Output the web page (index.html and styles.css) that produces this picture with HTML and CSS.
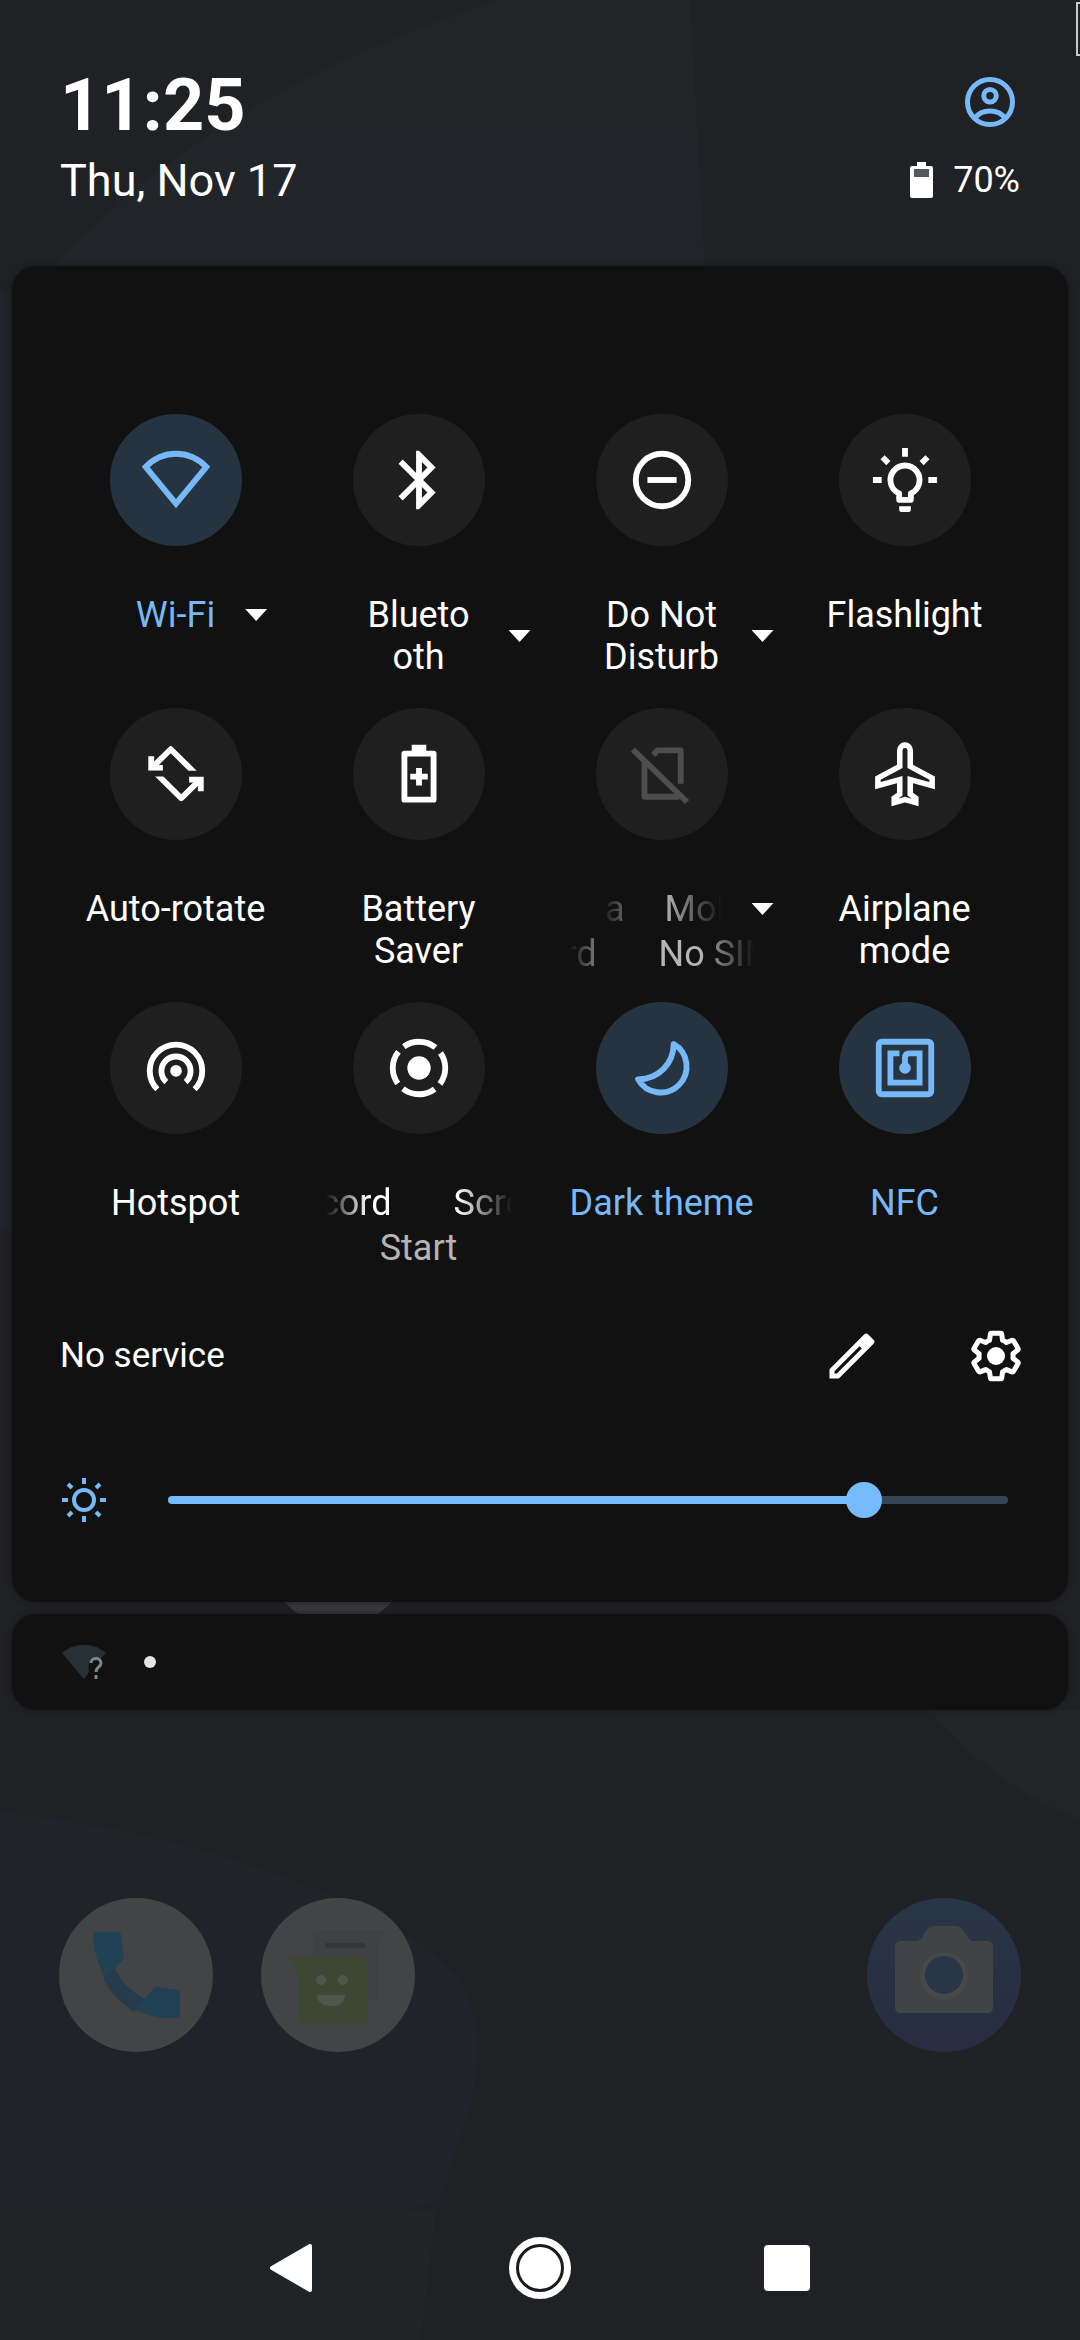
FILE: index.html
```html
<!DOCTYPE html>
<html lang="en">
<head>
<meta charset="utf-8">
<meta name="viewport" content="width=device-width, initial-scale=1">
<title>Quick settings</title>
<link rel="stylesheet" href="styles.css">
</head>
<body>
<svg class="wallpaper" viewBox="0 0 1080 2340" preserveAspectRatio="none" aria-hidden="true">
  <defs><linearGradient id="sheen" x2="0" y2="1"><stop offset=".4" stop-color="#222427"/><stop offset=".6" stop-color="#21252a"/></linearGradient></defs>
  <path fill="url(#sheen)" d="M40 280C130 190 230 90 500 0H690L705 280z"/>
  <path fill="#20242a" d="M0 290H12V1230H0zM0 1812C180 1830 390 1900 455 1975C500 2040 470 2110 440 2200L400 2210H0z"/>
  <path fill="#212427" d="M0 2210H436L420 2340H0z"/>
  <path fill="#222428" d="M930 1710C980 1770 1030 1800 1080 1820V1710z"/>
  <circle fill="#3a3b3d" cx="338" cy="1555" r="71"/>
  <path fill="none" stroke="#c8c8c8" stroke-width="2" d="M1082 3H1077V55H1082"/>
</svg>

<header class="status">
  <time class="clock">11:25</time>
  <button class="icon-button user" aria-label="User">
    <svg class="icon" viewBox="0 0 24 24"><g fill="none" stroke="currentColor" stroke-width="2"><circle cx="12" cy="12" r="9"/><circle cx="12" cy="9.5" r="2.5"/><path d="M6 18.4C8.6 14.6 15.4 14.6 18 18.4"/></g></svg>
  </button>
  <span class="date">Thu, Nov 17</span>
  <span class="battery">
    <svg class="battery-icon" viewBox="0 0 23 36"><path fill="currentColor" d="M7 0h9v4h5a2 2 0 0 1 2 2v28a2 2 0 0 1-2 2H2a2 2 0 0 1-2-2V6a2 2 0 0 1 2-2h5z"/><path fill="#55585a" d="M4 7h15v8H4z"/></svg>
    70%
  </span>
</header>

<main class="panel">
  <div class="tiles">
    <button class="tile on">
      <span class="disc"><svg class="tile-icon" viewBox="0 0 24 24"><path fill="none" stroke="currentColor" stroke-width="2" d="M12 20.1L1.6 7.5C4.4 4.7 8 3 12 3s7.6 1.7 10.4 4.5z"/></svg></span>
      <span class="label"><span class="name">Wi-Fi</span><span class="caret"></span></span>
    </button>
    <button class="tile">
      <span class="disc"><svg class="tile-icon" viewBox="0 0 24 24"><path fill="currentColor" d="M17.71 7.71L12 2h-1v7.59L6.41 5 5 6.41 10.59 12 5 17.59 6.41 19 11 14.41V22h1l5.71-5.71-4.3-4.29 4.3-4.29zM13 5.83l1.88 1.88L13 9.59V5.83zm1.88 10.46L13 18.17v-3.76l1.88 1.88z"/></svg></span>
      <span class="label"><span class="name">Bluetooth</span><span class="caret"></span></span>
    </button>
    <button class="tile">
      <span class="disc"><svg class="tile-icon" viewBox="0 0 24 24"><g fill="none" stroke="currentColor" stroke-width="2"><circle cx="12" cy="12" r="9"/><path d="M7 12h10"/></g></svg></span>
      <span class="label"><span class="name">Do Not Disturb</span><span class="caret"></span></span>
    </button>
    <button class="tile">
      <span class="disc"><svg class="tile-icon" viewBox="0 0 24 24"><g fill="none" stroke="currentColor" stroke-width="2"><path d="M12 1v3M1 12h3M20 12h3M4.3 4.2l2 2M19.7 4.2l-2 2"/><path d="M10 18.8h4v-2.2a5 5 0 1 0-4 0z" stroke-linejoin="round"/></g><path fill="currentColor" d="M10 21h4v1a1 1 0 0 1-1 1h-2a1 1 0 0 1-1-1z"/></svg></span>
      <span class="label"><span class="name">Flashlight</span></span>
    </button>

    <button class="tile">
      <span class="disc"><svg class="tile-icon" viewBox="0 0 24 24"><defs><clipPath id="upper"><path d="M0 0h24v10.9H0z"/></clipPath></defs><g id="half" clip-path="url(#upper)"><path fill="none" stroke="currentColor" stroke-width="2" stroke-linejoin="round" d="M4.4 9.2L10.2 3.5L19.2 12.4"/><path fill="currentColor" d="M2.5 5.9h2v3h3v2h-5z"/></g><use href="#half" transform="rotate(180 12 11.9)"/></svg></span>
      <span class="label"><span class="name">Auto-rotate</span></span>
    </button>
    <button class="tile">
      <span class="disc"><svg class="tile-icon" viewBox="0 0 24 24"><path fill="none" stroke="currentColor" stroke-width="2" stroke-linejoin="round" d="M7 5h10v15.8H7z"/><path fill="currentColor" d="M9.5 2h5v3h-5zM11 9.9h2v2h2v2h-2v2h-2v-2H9v-2h2z"/></svg></span>
      <span class="label"><span class="name">Battery Saver</span></span>
    </button>
    <button class="tile unavailable" aria-label="Mobile data, No SIM card">
      <span class="disc"><svg class="tile-icon" viewBox="0 0 24 24"><g fill="none" stroke="currentColor" stroke-width="2" stroke-linejoin="round"><path d="M2 3.6L20.6 21.6"/><path d="M6 7.6v12.2h12M9 5.5l1.4-1.6h8v11.4"/></g></svg></span>
      <span class="label"><span class="name marquee narrow"><span class="tail">a</span><span class="head">Mob</span></span><span class="caret"></span></span>
      <span class="sub marquee"><span class="tail short">rd</span><span class="head">No SIM</span></span>
    </button>
    <button class="tile">
      <span class="disc"><svg class="tile-icon" viewBox="0 0 24 24"><path fill="none" stroke="currentColor" stroke-width="1.9" d="M12 2.1a1.8 1.8 0 0 0-1.8 1.8v5.5L2.7 13.4v2.6l7.5-2.1v5l-1.9 1.4v1.5l3.7-1 3.7 1v-1.5l-1.9-1.4v-5l7.5 2.1v-2.6l-7.5-4V3.9A1.8 1.8 0 0 0 12 2.1z"/></svg></span>
      <span class="label"><span class="name">Airplane mode</span></span>
    </button>

    <button class="tile">
      <span class="disc"><svg class="tile-icon" viewBox="0 0 24 24"><circle cx="12" cy="13" r="2" fill="currentColor"/><g fill="none" stroke="currentColor" stroke-width="2"><path d="M8.7 16.8A5 5 0 1 1 15.3 16.8"/><path d="M5.6 19.3A9 9 0 1 1 18.4 19.3"/></g></svg></span>
      <span class="label"><span class="name">Hotspot</span></span>
    </button>
    <button class="tile" aria-label="Screen Record, Start">
      <span class="disc"><svg class="tile-icon" viewBox="0 0 24 24"><circle cx="12" cy="12" r="4" fill="currentColor"/><circle cx="12" cy="12" r="9" fill="none" stroke="currentColor" stroke-width="2" stroke-dasharray="11.64 2.497" stroke-dashoffset="5.82"/></svg></span>
      <span class="label"><span class="name marquee"><span class="tail long">cord</span><span class="head">Scre</span></span></span>
      <span class="sub">Start</span>
    </button>
    <button class="tile on">
      <span class="disc"><svg class="tile-icon" viewBox="0 0 24 24"><path fill="none" stroke="currentColor" stroke-width="2" stroke-linejoin="round" d="M16 3.8A8.9 8.9 0 1 1 3.8 15.9C11 15.7 15.9 10.5 16 3.8z"/></svg></span>
      <span class="label"><span class="name">Dark theme</span></span>
    </button>
    <button class="tile on">
      <span class="disc"><svg class="tile-icon" viewBox="0 0 24 24"><g fill="none" stroke="currentColor" stroke-width="2"><rect x="3" y="3" width="18" height="18" rx="1"/><path d="M10.1 7H7v10h10V7h-3.5Q12 7 12 8.5V12"/></g><circle cx="12" cy="12" r="2" fill="currentColor"/></svg></span>
      <span class="label"><span class="name">NFC</span></span>
    </button>
  </div>

  <div class="footer">
    <span class="carrier">No service</span>
    <button class="icon-button" aria-label="Edit tiles">
      <svg class="icon" viewBox="0 0 24 24"><path fill="currentColor" fill-rule="evenodd" d="M3 17.25V21h3.75L20.71 7.04c.39-.39.39-1.02 0-1.41l-2.34-2.34c-.39-.39-1.02-.39-1.41 0zM5 19v-.92L15 8.1l.92.92L5.92 19z"/></svg>
    </button>
    <button class="icon-button" aria-label="Settings">
      <svg class="icon" viewBox="0 0 24 24"><path fill="none" stroke="currentColor" stroke-width="2.2" stroke-linejoin="round" transform="translate(1.1 1.1) scale(.91)" d="M19.43 12.98c.04-.32.07-.64.07-.98 0-.34-.03-.66-.07-.98l2.11-1.65c.19-.15.24-.42.12-.64l-2-3.46c-.09-.16-.26-.25-.44-.25-.06 0-.12.01-.17.03l-2.49 1c-.52-.4-1.08-.73-1.69-.98l-.38-2.65C14.46 2.18 14.25 2 14 2h-4c-.25 0-.46.18-.49.42l-.38 2.65c-.61.25-1.17.59-1.69.98l-2.49-1c-.06-.02-.12-.03-.18-.03-.17 0-.34.09-.43.25l-2 3.46c-.13.22-.07.49.12.64l2.11 1.65c-.04.32-.07.65-.07.98 0 .33.03.66.07.98l-2.11 1.65c-.19.15-.24.42-.12.64l2 3.46c.09.16.26.25.44.25.06 0 .12-.01.17-.03l2.49-1c.52.4 1.08.73 1.69.98l.38 2.65c.03.24.24.42.49.42h4c.25 0 .46-.18.49-.42l.38-2.65c.61-.25 1.17-.59 1.69-.98l2.49 1c.06.02.12.03.18.03.17 0 .34-.09.43-.25l2-3.46c.12-.22.07-.49-.12-.64z"/><circle cx="12" cy="12" r="3.6" fill="currentColor"/></svg>
    </button>
  </div>

  <div class="brightness">
    <svg class="sun" viewBox="-24 -24 48 48" aria-hidden="true"><g fill="none" stroke="currentColor" stroke-width="4"><circle r="10"/><path d="M0-22v6M0 22v-6M-22 0h6M22 0h-6M-16-16l4 4M16-16l-4 4M-16 16l4-4M16 16l-4-4"/></g></svg>
    <input class="slider" type="range" min="0" max="1000" value="843" aria-label="Brightness">
  </div>
</main>

<section class="panel shelf" aria-label="Notifications">
  <svg class="shelf-wifi" viewBox="0 0 44 36"><path fill="#263035" d="M22 35L0 9C12-2 32-2 44 9L38 15Q24 12 27 28z"/><path fill="none" stroke="#7d878b" stroke-width="3" d="M29 19c0-6 10-6 10 0 0 4-5 4-5 9M34 31v4"/></svg>
  <span class="dot"></span>
</section>

<nav class="dock" aria-label="Favorites">
  <a class="app" href="#phone" aria-label="Phone">
    <svg viewBox="0 0 154 154"><circle cx="77" cy="77" r="77" fill="#424446"/><path fill="#214254" d="M34 36q0-2 3-2h22q3 0 3 4l3 20q0 3-2 5l-8 8q12 21 31 30l9-11q2-2 5-1l18 3q3 1 3 3v22q0 3-3 3-24 2-44-10Q44 90 35 50z"/><path fill="#263b4b" d="M55 70q12 22 31 31l-11 13Q52 98 44 80z"/></svg>
  </a>
  <a class="app" href="#messaging" aria-label="Messaging">
    <svg viewBox="0 0 154 154"><circle cx="77" cy="77" r="77" fill="#424446"/><path fill="#3f4144" d="M52 32h74l-8 12v58H52z"/><path fill="#35373a" d="M64 45h40v5H64z"/><path fill="#3d4834" d="M26 58h74q6 0 6 6v56q0 6-6 6H43q-6 0-6-6V80q0-10-11-22z"/><path fill="#4f574d" d="M56 97h28q-1 11-14 11T56 97z"/><circle cx="60" cy="82" r="5" fill="#4f574d"/><circle cx="82" cy="82" r="5" fill="#4f574d"/></svg>
  </a>
  <a class="app last" href="#camera" aria-label="Camera">
    <svg viewBox="0 0 154 154"><defs><linearGradient id="lens" x2="0" y2="1"><stop offset="0" stop-color="#283646"/><stop offset="1" stop-color="#282c41"/></linearGradient></defs><circle cx="77" cy="77" r="77" fill="url(#lens)"/><path fill="#424345" d="M34 43h16q4-1 6-5 4-10 11-10h22q6 0 10 9 4 6 8 6h13q6 0 6 6v60q0 6-6 6H34q-6 0-6-6V49q0-6 6-6z"/><circle cx="77" cy="78" r="24" fill="#464849"/><circle cx="77" cy="77" r="19" fill="#293646"/></svg>
  </a>
</nav>

<nav class="navbar" aria-label="System navigation">
  <button class="nav-button" aria-label="Back"><svg viewBox="0 0 64 64"><path fill="#fff" stroke="#fff" stroke-width="4" stroke-linejoin="round" d="M11 32L49 10V54z"/></svg></button>
  <button class="nav-button" aria-label="Home"><svg viewBox="0 0 64 64"><circle cx="32" cy="32" r="31" fill="#fff"/><circle cx="32" cy="32" r="22.5" fill="none" stroke="#1b1b1c" stroke-width="3"/></svg></button>
  <button class="nav-button" aria-label="Overview"><svg viewBox="0 0 64 64"><rect x="9" y="9" width="46" height="46" rx="4" fill="#fff"/></svg></button>
</nav>
</body>
</html>
```
FILE: styles.css
```css
* {
  box-sizing: border-box;
}

body {
  --accent: #77b8f8;
  position: relative;
  display: flex;
  flex-direction: column;
  min-height: 100vh;
  margin: 0;
  background: #202124;
  color: #fff;
  font-family: Roboto, "Noto Sans", sans-serif;
  font-size: 36px;
  line-height: 42px;
}

button {
  padding: 0;
  border: 0;
  background: none;
  color: inherit;
  font: inherit;
}

svg {
  display: block;
}

.wallpaper {
  position: absolute;
  inset: 0;
  z-index: -1;
  width: 100%;
  height: 100%;
}

/* Clock, date and battery above the panel */
.status {
  display: grid;
  grid-template-columns: 1fr auto;
  row-gap: 4px;
  padding: 64px 60px 56px;
}

.clock {
  font-size: 72px;
  font-weight: 700;
  line-height: 84px;
}

.date {
  font-size: 45px;
  line-height: 58px;
}

.user {
  justify-self: end;
  margin-top: 8px;
  color: var(--accent);
}

.battery {
  display: flex;
  align-items: center;
  gap: 20px;
  height: 56px;
}

.battery-icon {
  width: 23px;
  height: 36px;
}

.icon-button,
.icon {
  width: 60px;
  height: 60px;
}

.panel {
  margin: 0 12px;
  border-radius: 24px;
  background: #111;
  box-shadow: 0 0 6px #17181a;
}

main.panel {
  padding: 148px 42px 18px;
}

/* Quick settings tiles */
.tiles {
  display: grid;
  grid-template-columns: repeat(4, 1fr);
  grid-auto-rows: 294px;
}

.tile {
  display: flex;
  flex-direction: column;
  align-items: center;
}

.disc {
  display: grid;
  place-items: center;
  width: 132px;
  height: 132px;
  margin-bottom: 48px;
  border-radius: 50%;
  background: #1f1f1f;
}

.tile-icon {
  width: 70px;
  height: 70px;
}

.on {
  color: var(--accent);
}

.on .disc {
  background: #263340;
}

.unavailable {
  color: #aaa;
}

.unavailable .tile-icon {
  color: #4d4d4d;
}

.label {
  display: grid;
  grid-template-columns: 1fr auto 1fr;
  align-items: center;
}

.name {
  grid-column: 2;
  max-width: 200px;
}

.name:has(+ .caret) {
  max-width: 120px;
  overflow-wrap: anywhere;
}

.label:has(.caret) {
  column-gap: 30px;
}

.caret {
  width: 22px;
  height: 12px;
  background: #fff;
  clip-path: polygon(0 0, 100% 0, 50% 100%);
}

.label:has(.caret)::before {
  content: "";
  width: 22px;
}

.sub {
  line-height: 48px;
  color: #b4b4b4;
}

.marquee {
  display: flex;
  gap: 62px;
  width: 186px;
  overflow: hidden;
  white-space: nowrap;
  mask-image: linear-gradient(90deg, transparent, #000 42px, #000 calc(100% - 54px), transparent);
}

.marquee.narrow {
  gap: 40px;
  width: 120px;
}

.tail {
  display: flex;
  flex: none;
  justify-content: flex-end;
  width: 23px;
}

.tail.short {
  width: 28px;
}

.tail.long {
  width: 66px;
}

.head {
  flex: none;
}

/* Carrier line and panel actions */
.footer {
  display: flex;
  align-items: center;
  height: 120px;
  gap: 84px;
}

.carrier {
  flex: 1;
  padding-left: 6px;
  font-size: 35px;
}

.brightness {
  display: flex;
  align-items: center;
  gap: 60px;
  height: 168px;
  padding: 0 18px 0 6px;
}

.sun {
  flex: none;
  width: 48px;
  height: 48px;
  color: var(--accent);
}

.slider {
  flex: 1;
  height: 36px;
  margin: 0;
  appearance: none;
  background: none;
}

.slider::-webkit-slider-runnable-track {
  height: 8px;
  border-radius: 4px;
  background: linear-gradient(90deg, #77bbff 84%, #344555 84%);
}

.slider::-webkit-slider-thumb {
  width: 36px;
  height: 36px;
  margin-top: -14px;
  appearance: none;
  border-radius: 50%;
  background: #77bbff;
}

/* Silent notification shelf */
.shelf {
  display: flex;
  align-items: center;
  gap: 38px;
  height: 96px;
  margin-top: 12px;
  padding: 0 50px;
}

.shelf-wifi {
  width: 44px;
  height: 36px;
}

.dot {
  width: 12px;
  height: 12px;
  border-radius: 50%;
  background: #e4e4e4;
}

.dock {
  display: flex;
  gap: 48px;
  margin-top: 188px;
  padding: 0 59px;
}

.app {
  width: 154px;
  height: 154px;
}

.last {
  margin-left: auto;
}

.navbar {
  display: flex;
  align-items: center;
  justify-content: center;
  gap: 183px;
  height: 144px;
  margin-top: auto;
}

.nav-button,
.nav-button svg {
  width: 64px;
  height: 64px;
}
```
